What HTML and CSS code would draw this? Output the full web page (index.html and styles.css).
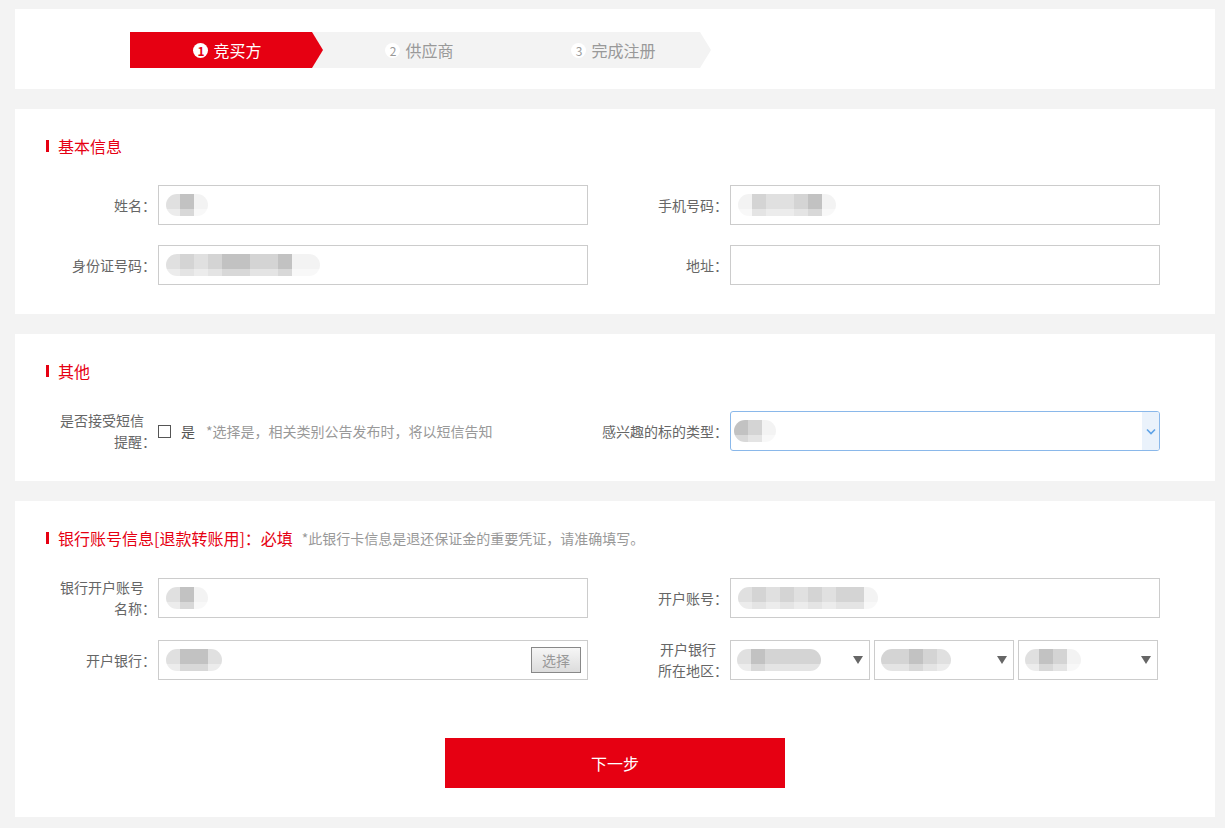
FILE: index.html
```html
<!DOCTYPE html>
<html lang="zh-CN">
<head>
    <meta charset="UTF-8">
    <meta name="viewport" content="width=device-width, initial-scale=1.0">
    <title>竞买方注册</title>
    <link rel="stylesheet" href="styles.css">
</head>
<body>
    <!-- Steps -->
    <div class="card steps-card">
        <div class="steps">
            <div class="step active"><span class="num">1</span>竞买方</div>
            <div class="step"><span class="num">2</span>供应商</div>
            <div class="step"><span class="num">3</span>完成注册</div>
        </div>
    </div>

    <!-- 基本信息 -->
    <div class="card">
        <div class="sec-title">基本信息</div>
        <div class="row">
            <label class="lbl">姓名：</label>
            <div class="field"><span class="mask"><i class="s1"></i><i class="s3"></i><i class="s0"></i></span></div>
            <label class="lbl">手机号码：</label>
            <div class="field"><span class="mask"><i class="s0"></i><i class="s2"></i><i class="s1"></i><i class="s1"></i><i class="s2"></i><i class="s3"></i><i class="s0"></i></span></div>
        </div>
        <div class="row">
            <label class="lbl">身份证号码：</label>
            <div class="field"><span class="mask"><i class="s1"></i><i class="s2"></i><i class="s1"></i><i class="s2"></i><i class="s3"></i><i class="s3"></i><i class="s2"></i><i class="s2"></i><i class="s3"></i><i class="s0"></i><i class="s0"></i></span></div>
            <label class="lbl">地址：</label>
            <div class="field"></div>
        </div>
    </div>

    <!-- 其他 -->
    <div class="card">
        <div class="sec-title">其他</div>
        <div class="row">
            <label class="lbl"><span class="l1">是否接受短信</span><br>提醒：</label>
            <div class="check-line">
                <span class="check"></span>
                <span class="yes">是</span>
                <span class="hint">*选择是，相关类别公告发布时，将以短信告知</span>
            </div>
            <label class="lbl">感兴趣的标的类型：</label>
            <div class="field focus">
                <span class="mask"><i class="s3"></i><i class="s2"></i><i class="s0"></i></span>
                <span class="chev">
                    <svg width="10" height="7" viewBox="0 0 10 7"><path d="M1 1.5 L5 5.5 L9 1.5" fill="none" stroke="#5ea2e6" stroke-width="1.6"/></svg>
                </span>
            </div>
        </div>
    </div>

    <!-- 银行账号信息 -->
    <div class="card">
        <div class="sec-title">银行账号信息[退款转账用]：必填<span class="sec-hint">*此银行卡信息是退还保证金的重要凭证，请准确填写。</span></div>
        <div class="row">
            <label class="lbl"><span class="l1">银行开户账号</span><br>名称：</label>
            <div class="field"><span class="mask"><i class="s1"></i><i class="s3"></i><i class="s0"></i></span></div>
            <label class="lbl">开户账号：</label>
            <div class="field"><span class="mask"><i class="s1"></i><i class="s2"></i><i class="s1"></i><i class="s2"></i><i class="s1"></i><i class="s2"></i><i class="s1"></i><i class="s2"></i><i class="s2"></i><i class="s0"></i></span></div>
        </div>
        <div class="row">
            <label class="lbl">开户银行：</label>
            <div class="field">
                <span class="mask"><i class="s1"></i><i class="s3"></i><i class="s3"></i><i class="s1"></i></span>
                <button class="pick">选择</button>
            </div>
            <label class="lbl"><span class="l1">开户银行</span><br>所在地区：</label>
            <div class="selects">
                <div class="sel"><span class="mask"><i class="s1"></i><i class="s3"></i><i class="s2"></i><i class="s2"></i><i class="s2"></i><i class="s2"></i></span><span class="tri"></span></div>
                <div class="sel"><span class="mask"><i class="s2"></i><i class="s2"></i><i class="s3"></i><i class="s2"></i><i class="s1"></i></span><span class="tri"></span></div>
                <div class="sel"><span class="mask"><i class="s1"></i><i class="s3"></i><i class="s2"></i><i class="s0"></i></span><span class="tri"></span></div>
            </div>
        </div>
        <div class="actions">
            <button class="next">下一步</button>
        </div>
    </div>
</body>
</html>
```

FILE: styles.css
```css
body {
    margin: 9px 10px 0 15px;
    background: #f3f3f3;
    font-family: "Microsoft YaHei", "Noto Sans CJK SC", sans-serif;
    font-size: 14px;
    color: #666;
}

.card {
    background: #fff;
    margin-bottom: 20px;
    padding: 26px 55px 29px 31px;
}

/* Steps */
.steps-card {
    padding: 23px 0 21px 115px;
}

.steps {
    display: flex;
    width: 581px;
    height: 36px;
    background: #f3f3f3;
    clip-path: polygon(0 0, calc(100% - 11px) 0, 100% 50%, calc(100% - 11px) 100%, 0 100%);
}

.step {
    flex: 0 0 193px;
    display: flex;
    align-items: center;
    justify-content: center;
    font-size: 16px;
    color: #999;
}

.step:last-child {
    flex-basis: 195px;
}

.step.active {
    background: #e60012;
    color: #fff;
    padding-left: 2px;
    box-sizing: border-box;
    clip-path: polygon(0 0, calc(100% - 11px) 0, 100% 50%, calc(100% - 11px) 100%, 0 100%);
}

.num {
    width: 15px;
    height: 15px;
    border-radius: 50%;
    background: #fff;
    color: #999;
    font-size: 12px;
    line-height: 15px;
    text-align: center;
    margin-right: 5px;
}

.step.active .num {
    color: #e60012;
    font-weight: bold;
}

/* Section title */
.sec-title {
    display: flex;
    align-items: center;
    color: #e60012;
    font-size: 16px;
    line-height: 22px;
    margin-bottom: 28px;
}

.sec-title::before {
    content: "";
    width: 3px;
    height: 12px;
    background: #e60012;
    margin-right: 9px;
}

.sec-hint {
    color: #999;
    font-size: 14px;
    margin-left: 9px;
}

/* Form rows */
.row {
    display: grid;
    grid-template-columns: 104px 430px 126px 430px;
    column-gap: 8px;
    align-items: center;
    margin-top: 20px;
}

.sec-title + .row {
    margin-top: 0;
}

.lbl {
    text-align: right;
    line-height: 21px;
    white-space: nowrap;
    margin-right: -6px;
}

.lbl .l1 {
    margin-right: 12px;
}

.field {
    height: 40px;
    box-sizing: border-box;
    border: 1px solid #ccc;
    display: flex;
    align-items: center;
    justify-content: space-between;
    padding-left: 7px;
}

.field.focus {
    border-color: #8ab8ea;
    border-radius: 3px;
    padding-left: 3px;
}

.chev {
    width: 17px;
    height: 38px;
    background: #eaf2fb;
    display: flex;
    align-items: center;
    justify-content: center;
    border-radius: 0 2px 2px 0;
}

/* blurred values */
.mask {
    display: flex;
    height: 22px;
    border-radius: 11px;
    overflow: hidden;
}

.mask i {
    width: 14px;
    height: 100%;
}

.mask .s0 { background: linear-gradient(#f3f3f3 70%, #f8f8f8 70%); }
.mask .s1 { background: linear-gradient(#e0e0e0 70%, #ececec 70%); }
.mask .s2 { background: linear-gradient(#d4d4d4 70%, #e4e4e4 70%); }
.mask .s3 { background: linear-gradient(#c2c2c2 70%, #d8d8d8 70%); }

.check-line {
    display: flex;
    align-items: center;
}

.check {
    width: 11px;
    height: 11px;
    border: 1px solid #555;
    margin-right: 10px;
}

.yes {
    color: #555;
    margin-right: 11px;
}

.hint {
    color: #999;
}

.pick {
    width: 50px;
    height: 26px;
    margin-right: 6px;
    border: 1px solid #888;
    background: linear-gradient(#f6f6f6, #dcdcdc);
    color: #999;
    font-family: inherit;
    font-size: 14px;
    padding: 0;
}

.selects {
    display: grid;
    grid-template-columns: 140px 140px 140px;
    column-gap: 4px;
}

.sel {
    height: 40px;
    box-sizing: border-box;
    border: 1px solid #ccc;
    display: flex;
    align-items: center;
    justify-content: space-between;
    padding: 0 6px 0 6px;
}

.tri {
    width: 0;
    height: 0;
    border-left: 5px solid transparent;
    border-right: 5px solid transparent;
    border-top: 8px solid #666;
}

.actions {
    display: flex;
    justify-content: center;
    margin-top: 57px;
    padding-left: 24px;
}

.next {
    width: 340px;
    height: 50px;
    border: none;
    background: #e60012;
    color: #fff;
    font-family: inherit;
    font-size: 16px;
}
```
